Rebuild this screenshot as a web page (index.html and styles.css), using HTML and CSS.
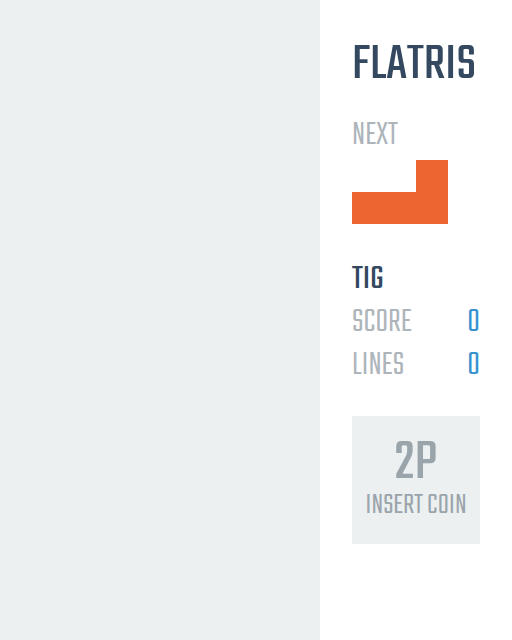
FILE: index.html
```html
<!DOCTYPE html>
<html lang="en">
<head>
  <meta charset="utf-8">
  <meta name="viewport" content="width=device-width, initial-scale=1">
  <title>Flatris</title>
  <link rel="stylesheet" href="styles.css">
</head>
<body>
  <main class="game">
    <section class="well" aria-label="Well"></section>
    <aside class="panel">
      <h1 class="title">FLATRIS</h1>
      <section class="next">
        <h2 class="label">NEXT</h2>
        <svg class="piece" viewBox="0 0 4 2" aria-hidden="true">
          <path d="M2 0h1v2H0V1h2z"/>
        </svg>
      </section>
      <section class="player">
        <h2 class="name">TIG</h2>
        <dl class="stats">
          <div class="stat"><dt>SCORE</dt><dd>0</dd></div>
          <div class="stat"><dt>LINES</dt><dd>0</dd></div>
        </dl>
      </section>
      <button class="join" type="button">
        <span class="join-player">2P</span>
        <span class="join-hint">INSERT COIN</span>
      </button>
    </aside>
  </main>
</body>
</html>
```
FILE: styles.css
```css
* {
  box-sizing: border-box;
}

body {
  margin: 0;
  background: #fff;
  color: #34495f;
  font-family: "Teko", "Liberation Sans Narrow", "Roboto Condensed", "Liberation Sans", sans-serif;
}

.game {
  display: grid;
  grid-template-columns: 10fr 6fr;
  min-height: 100vh;
}

.well {
  background: #ecf0f1;
}

.panel {
  min-width: 0;
  padding: 32px;
}

.title,
.label,
.name,
.stats,
.stat dd {
  margin: 0;
}

.title {
  font-size: 54px;
  line-height: 66px;
  font-weight: 400;
}

.next {
  margin-top: 16px;
}

.label,
.name,
.stat {
  font-size: 35px;
  line-height: 43px;
  font-weight: 300;
}

.label,
.stat dt {
  color: #adb5bb;
}

.piece {
  display: block;
  width: 100%;
  margin-top: 3px;
  fill: #ed652f;
}

.player {
  margin-top: 34px;
}

.name {
  font-weight: 400;
}

.stat {
  display: flex;
  justify-content: space-between;
}

.stat dd {
  color: #3993d0;
}

.join {
  display: flex;
  flex-direction: column;
  align-items: center;
  justify-content: center;
  width: 100%;
  margin-top: 29px;
  padding: 0;
  aspect-ratio: 1;
  border: 0;
  background: #ecf0f1;
  color: #9aa4ab;
  font-family: inherit;
  cursor: pointer;
}

.join-player {
  font-size: 60px;
  line-height: 52px;
  font-weight: 400;
}

.join-hint {
  font-size: 31px;
  line-height: 32px;
  font-weight: 300;
  white-space: nowrap;
}
```
